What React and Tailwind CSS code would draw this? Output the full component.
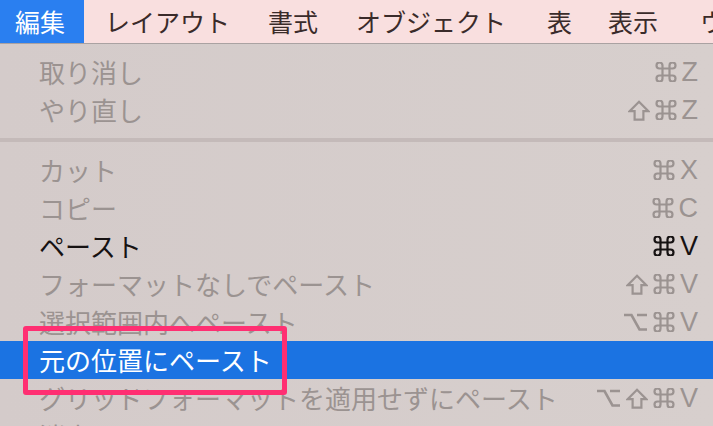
import React from 'react';

const jp = { fontFamily: '"Noto Sans CJK JP", "Noto Sans", sans-serif' };
const latin = { fontFamily: '"Liberation Sans", "DejaVu Sans", sans-serif' };

const menus = [
    { label: 'レイアウト', cls: 'ml-[21px]' },
    { label: '書式', cls: 'ml-[38px]' },
    { label: 'オブジェクト', cls: 'ml-[38px]' },
    { label: '表', cls: 'ml-[41px]' },
    { label: '表示', cls: 'ml-[36px]' },
    { label: 'ウィンドウ', cls: 'ml-[42px]' },
];

const groups = [
    [
        { label: '取り消し', keys: '⌘Z' },
        { label: 'やり直し', keys: '⇧⌘Z' },
    ],
    [
        { label: 'カット', keys: '⌘X' },
        { label: 'コピー', keys: '⌘C' },
        { label: 'ペースト', keys: '⌘V', enabled: true },
        { label: 'フォーマットなしでペースト', keys: '⇧⌘V' },
        { label: '選択範囲内へペースト', keys: '⌥⌘V' },
        { label: '元の位置にペースト', keys: '', selected: true },
        { label: 'グリッドフォーマットを適用せずにペースト', keys: '⌥⇧⌘V' },
        { label: '消去', keys: '' },
    ],
];

const ShiftIcon = () => (
    <svg width="22" height="21" viewBox="0 0 22 21" fill="none" stroke="currentColor" strokeWidth="2.2">
        <path d="M11 1.8 L20.4 11.2 H15.4 V19.6 H6.6 V11.2 H1.6 Z" />
    </svg>
);

const OptionIcon = () => (
    <svg width="25" height="20" viewBox="0 0 25 20" fill="none" stroke="currentColor" strokeWidth="2.6">
        <path d="M1 3 H8.5 L16.5 17.5 H24 M14 3 H24" />
    </svg>
);

const CommandIcon = () => (
    <svg width="22" height="20" viewBox="0 0 22 20" fill="none" stroke="currentColor" strokeWidth="2.2">
        <path d="M7.5 6.5 V3.5 A3 3 0 1 0 4.5 6.5 H17.5 A3 3 0 1 0 14.5 3.5 V16.5 A3 3 0 1 0 17.5 13.5 H4.5 A3 3 0 1 0 7.5 16.5 V6.5" />
    </svg>
);

const Keys = ({ value }) => (
    <span className="flex items-center gap-[5px]">
        {[...value].map((ch, i) => {
            if (ch === '⇧') return <ShiftIcon key={i} />;
            if (ch === '⌥') return <OptionIcon key={i} />;
            if (ch === '⌘') return <CommandIcon key={i} />;
            return <span key={i} style={latin} className="text-[27px] leading-none">{ch}</span>;
        })}
    </span>
);

const MenuRow = ({ item }) => {
    const color = item.selected
        ? 'text-white bg-[#1b73e2]'
        : item.enabled
            ? 'text-[#161212]'
            : 'text-[#9b9391]';
    return (
        <div className={`h-[38px] flex items-center justify-between pl-[39px] pr-[15px] shrink-0 ${color}`}>
            <span style={jp} className="text-[26px] leading-none whitespace-nowrap">{item.label}</span>
            <Keys value={item.keys} />
        </div>
    );
};

export default function App() {
    return (
        <div className="relative w-[713px] h-[426px] overflow-hidden bg-[#d5cccb]">
            {/* menu bar */}
            <div className="h-[44px] flex items-stretch bg-[#f9dfdf] border-b border-[#aaa2a2] whitespace-nowrap">
                <div style={jp} className="w-[84px] shrink-0 bg-[#2a7ff0] text-white text-[25px] flex items-center pl-[15px]">編集</div>
                {menus.map((m) => (
                    <div key={m.label} style={jp} className={`shrink-0 text-[25px] text-[#3a2b2a] flex items-center ${m.cls}`}>
                        {m.label}
                    </div>
                ))}
            </div>

            {/* dropdown */}
            <div className="flex flex-col bg-gradient-to-r from-[#d4cbca] to-[#d7cfcd] h-[382px] pt-[9px]">
                {groups[0].map((it) => <MenuRow key={it.label} item={it} />)}
                <div className="h-[22px] flex items-center shrink-0">
                    <div className="w-full h-[4px] bg-[#c4bab9]" />
                </div>
                {groups[1].map((it) => <MenuRow key={it.label} item={it} />)}
            </div>

            {/* annotation box */}
            <div className="absolute left-[23px] top-[326px] w-[264px] h-[69px] border-[5px] border-[#ff2f72] rounded-[3px]" />
        </div>
    );
}
